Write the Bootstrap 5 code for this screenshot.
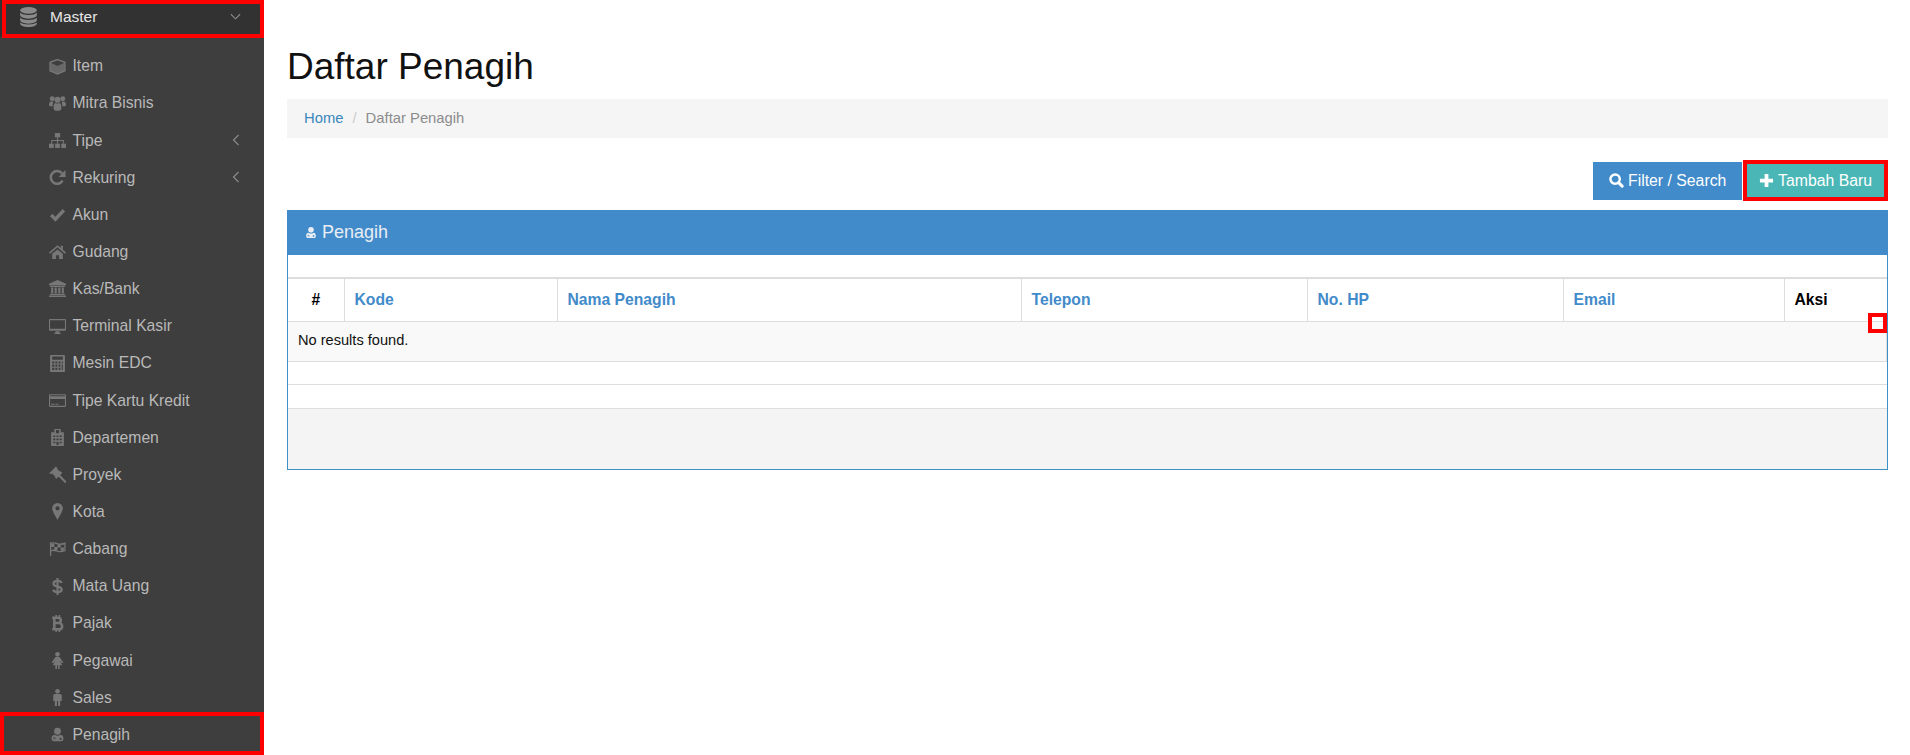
<!DOCTYPE html>
<html lang="id">
<head>
<meta charset="utf-8">
<title>Daftar Penagih</title>
<link rel="stylesheet" href="https://cdn.jsdelivr.net/npm/bootstrap@5.3.0/dist/css/bootstrap.min.css">
<style>
html,body{height:755px;overflow:hidden}
body{font-family:"Liberation Sans",Arial,sans-serif;font-size:14px;color:#000;background:#fff}
.app-shell{height:755px}
.side{width:264px;flex:none;background:#3e3e3e;height:755px;overflow:hidden;position:relative}
.side-head{height:37px;background:#323232;color:#e6e6e6;padding-left:19px;padding-right:23px;font-size:15.5px;padding-bottom:3px}
.side-head svg.ico{width:19px;height:20px;color:#8a8a8a;margin-right:12px;flex:none}
.side-list{padding-top:10.5px}
.side-item{height:37.15px;padding-left:49px;padding-right:23px;color:#b9b9b9;font-size:15.7px}
.side-item svg.ico{width:17px;height:17px;color:#777;margin-right:6.5px;flex:none}
.chev{width:11px;height:12px;color:#8a8a8a;margin-left:auto}
.redbox{position:absolute;border:4px solid #f00;pointer-events:none}
.rb-master{left:2px;top:0;width:262px;height:38px}
.rb-penagih{left:0;top:712px;width:264px;height:43px}
.main-area{padding:0 22px 0 23px;min-width:0}
.page-ttl{font-size:37px;line-height:42px;font-weight:400;margin:46px 0 11px;color:#111}
.crumb{background:#f5f5f5;height:39px;padding:0 17px;margin:0;font-size:14.8px}
.crumb .breadcrumb-item a{color:#3a87bd;text-decoration:none}
.crumb .breadcrumb-item.active{color:#8c8c8c}
.crumb .breadcrumb-item+.breadcrumb-item{padding-left:9px}
.crumb .breadcrumb-item+.breadcrumb-item::before{color:#ccc;padding-right:9px}
.tools{margin-top:22px;height:41px;gap:1px}
.tool-btn{border:0;border-radius:0;color:#fff;font-size:15.8px;height:38px;padding:0;background:#428bca;width:149px}
.tool-btn svg{width:15px;height:15px;vertical-align:-2px}
.tool-add{background:#4ab7b6;border:4px solid #f00;height:41px;width:145px;padding:0}
.pane{margin-top:9px;border:1px solid #3c92c6;border-top:0;height:260px;position:relative;display:flex;flex-direction:column}
.pane-head{background:#428bca;height:45px;margin:0 -1px;padding:0 17px;color:#e8eef4;font-size:18px;gap:4px;padding-bottom:1px}
.pane-head svg{width:14px;height:15px}
.pane-gap{height:22px}
.grid-tbl{table-layout:fixed;width:100%;margin:0;border-top:2px solid #ddd;font-size:14.6px}
.grid-tbl th{height:43px;padding:0 10px;vertical-align:middle;border-bottom:1px solid #ddd;border-right:1px solid #ddd;font-size:15.7px;color:#000}
.grid-tbl th a{color:#428bca;text-decoration:none}
.grid-tbl th:last-child{border-right:0}
.grid-tbl th.c-no{width:56px;text-align:center}
.grid-tbl th.c-kode{width:213px}
.grid-tbl th.c-nama{width:464px}
.grid-tbl th.c-tel{width:286px}
.grid-tbl th.c-hp{width:256px}
.grid-tbl th.c-mail{width:221px}
.grid-tbl td{background:#f9f9f9;height:40px;padding:0 10px;border-bottom:1px solid #ddd;border-right:1px solid #ddd;vertical-align:middle;color:#111}
.line-row{height:23.5px;border-bottom:1px solid #ddd}
.pane-foot{background:#f4f4f4;flex:1}
.mini-red{position:absolute;right:0;top:103px;width:19px;height:20px;border:4px solid #f00}
</style>
</head>
<body>
<svg width="0" height="0" class="d-none" aria-hidden="true">
<symbol id="i-db" viewBox="0 0 16 18"><g fill="currentColor"><ellipse cx="8" cy="3" rx="7.500" ry="3"/><path d="M.5 5c1.500 1.700 4.300 2.200 7.500 2.200S14 6.700 15.500 5v2.500c0 1.500-3.300 3-7.500 3s-7.500-1.500-7.500-3z"/><path d="M.5 9.500c1.500 1.700 4.300 2.200 7.500 2.200s6-.5 7.500-2.200V12c0 1.500-3.300 3-7.500 3s-7.500-1.500-7.500-3z"/><path d="M.5 14c1.500 1.200 4.300 1.800 7.500 1.800s6-.6 7.500-1.800v1c0 1.500-3.300 3-7.500 3s-7.500-1.500-7.500-3z"/></g></symbol>
<symbol id="i-cube" viewBox="0 0 16 16"><path fill="none" stroke="currentColor" stroke-width="1.300" d="M8 1.500l7 2.500v8l-7 3-7-3V4z"/><path fill="currentColor" d="M8 7.500l6.500-3v7.200L8 14.500zM1.500 4.500l6.500 3v7l-6.500-2.800z" fill-opacity=".75"/></symbol>
<symbol id="i-users" viewBox="0 0 16 16"><g fill="currentColor"><circle cx="3" cy="3.500" r="2.300"/><circle cx="13" cy="3.500" r="2.300"/><circle cx="8" cy="4.500" r="2.900"/><path d="M0 9.500c0-3 1-3.500 3-3.500l1.200.6C3.700 7.500 3.500 8.500 3.500 10.500H1c-.6 0-1-.4-1-1zM16 9.500c0-3-1-3.500-3-3.500l-1.200.6c.5.900.7 1.900.7 3.900H15c.6 0 1-.4 1-1z"/><path d="M4.300 12c0-3.500 1-4.500 2.200-4.500l1.500.8 1.500-.8c1.200 0 2.200 1 2.200 4.500 0 1.800-.8 2.800-2.200 2.800h-3c-1.400 0-2.200-1-2.200-2.800z"/></g></symbol>
<symbol id="i-site" viewBox="0 0 16 16"><g fill="currentColor"><rect x="5.500" y="1" width="5" height="4"/><rect x="0" y="11" width="4.500" height="4"/><rect x="5.750" y="11" width="4.500" height="4"/><rect x="11.500" y="11" width="4.500" height="4"/><path d="M7.500 5h1v2.500h5.500V11h-1V8.500H8.500V11h-1V8.500H3V11H2V7.500h5.500z"/></g></symbol>
<symbol id="i-redo" viewBox="0 0 16 16"><path fill="none" stroke="currentColor" stroke-width="2.400" d="M12.800 11A6 6 0 1 1 12.200 4"/><path fill="currentColor" d="M15.500 1v6.500H9z"/></symbol>
<symbol id="i-check" viewBox="0 0 16 16"><path fill="none" stroke="currentColor" stroke-width="3.200" d="M2 8.500l4 4 8-8.500"/></symbol>
<symbol id="i-home" viewBox="0 0 16 16"><path fill="currentColor" d="M8 2L0 9l1 1 7-6 7 6 1-1-3-2.600V2.500h-2v2.100zM3 10.200L8 6l5 4.200V15H9.500v-3.500h-3V15H3z"/></symbol>
<symbol id="i-bank" viewBox="0 0 16 16"><path fill="currentColor" d="M8 0l8 3.500V5H0V3.500zM1 5.500h14v1H1zM2 7h2v5.500H2zM5.300 7h2v5.500h-2zM8.700 7h2v5.500h-2zM12 7h2v5.500h-2zM1 13h14v1H1zM0 14.500h16V16H0z"/></symbol>
<symbol id="i-mon" viewBox="0 0 16 16"><path fill="currentColor" fill-rule="evenodd" d="M1 1h14c.6 0 1 .4 1 1v9c0 .6-.4 1-1 1H1c-.6 0-1-.4-1-1V2c0-.6.4-1 1-1zm0 1v8h14V2zM6 12.500h4V14h1v1H5v-1h1z"/></symbol>
<symbol id="i-calc" viewBox="0 0 16 16"><path fill="currentColor" fill-rule="evenodd" d="M2 0h12c.6 0 1 .4 1 1v14c0 .6-.4 1-1 1H2c-.6 0-1-.4-1-1V1c0-.6.4-1 1-1zm1 1.500v3h10v-3zM3 6v2h2V6zm3 0v2h1.800V6zm3 0v2h1.800V6zm3 0v2h1V6zM3 9v2h2V9zm3 0v2h1.800V9zm3 0v2h1.800V9zm3 0v5h1V9zM3 12v2h2v-2zm3 0v2h1.800v-2zm3 0v2h1.800v-2z"/></symbol>
<symbol id="i-card" viewBox="0 0 16 16"><path fill="currentColor" fill-rule="evenodd" d="M1 2h14c.6 0 1 .4 1 1v10c0 .6-.4 1-1 1H1c-.6 0-1-.4-1-1V3c0-.6.4-1 1-1zm0 1v1h14V3zm0 3.500V13h14V6.500zM2 11h3v1H2zm4 0h3v1H6z"/></symbol>
<symbol id="i-bld" viewBox="0 0 16 16"><path fill="currentColor" fill-rule="evenodd" d="M5 0h6v3h3v13H2V3h3zm1.500 1v3h3V1zM4 6v1.500h2V6zm3 0v1.500h2V6zm3 0v1.500h2V6zM4 9v1.500h2V9zm3 0v1.500h2V9zm3 0v1.500h2V9zm-3 3v3h2v-3zm-3 0v1.500h2V12zm6 0v1.500h2V12z"/></symbol>
<symbol id="i-gavel" viewBox="0 0 16 16"><path fill="currentColor" d="M0 7L6.500 0.500 8 2 7.500 2.500 10.500 5.500 11 5l1.500 1.500L7 12 5.500 10.500 6 10 3 7l-.5.500z"/><path fill="currentColor" d="M8.500 9.500l1.500-1.500 6 6c.5.500.5 1 0 1.500s-1 .5-1.500 0z"/></symbol>
<symbol id="i-pin" viewBox="0 0 16 16"><path fill="currentColor" fill-rule="evenodd" d="M8 0a5 5 0 0 1 5 5c0 3-3 7-5 11C6 12 3 8 3 5a5 5 0 0 1 5-5zm0 3a2 2 0 1 0 0 4 2 2 0 0 0 0-4z"/></symbol>
<symbol id="i-flag" viewBox="0 0 16 16"><path fill="none" stroke="currentColor" stroke-width="1.200" d="M1.500 2v13M2 3c3-1 4 0 6.500 .7 2 .5 4 .3 6.500-.7v7c-2.500 1-4.500 1.200-6.500 .7C6 10 5 9 2 10"/><path fill="currentColor" d="M2 3.500h3v3H2zM5 6.500h3v3H5zM8 4h3v3H8zM11 7h3v3h-3zM11 3.500h3v1h-3z"/></symbol>
<symbol id="i-dollar" viewBox="0 0 16 16"><path fill="none" stroke="currentColor" stroke-width="2.200" d="M12 4.500C11 3 9.500 2.700 8 2.700 6 2.700 4.300 3.700 4.300 5.300c0 3.700 7.600 1.700 7.600 5.600 0 1.500-1.800 2.400-3.900 2.400-1.800 0-3.300-.6-4.300-2"/><path fill="currentColor" d="M7 0h2v16H7z"/></symbol>
<symbol id="i-btc" viewBox="0 0 16 16"><path fill="none" stroke="currentColor" stroke-width="2.400" d="M3 2.500h5.500c3.500 0 3.500 5 0 5H5m0 0h4.500c3.800 0 3.800 6 0 6H3M5 2.500v11"/><path fill="currentColor" d="M6 0h1.500v2.500H6zM9 0h1.500v2.500H9zM6 13.500h1.500V16H6zM9 13.500h1.500V16H9z"/></symbol>
<symbol id="i-fem" viewBox="0 0 16 16"><g fill="currentColor"><circle cx="8" cy="2.200" r="2.200"/><path d="M6 4.800h4l3.500 5-1.200.8L10 8l2.500 4.500H10V16H8.500v-3.500h-1V16H6v-3.500H3.500L6 8l-2.300 2.600-1.200-.8z"/></g></symbol>
<symbol id="i-male" viewBox="0 0 16 16"><g fill="currentColor"><circle cx="8" cy="2.200" r="2.200"/><path d="M5.500 4.800h5c.8 0 1.500.7 1.500 1.500v5h-1.500V16H8.500v-4.700h-1V16H5.500v-4.700H4v-5c0-.8.7-1.500 1.500-1.500z"/></g></symbol>
<symbol id="i-doc" viewBox="-2 0 20 16"><g fill="currentColor"><circle cx="8" cy="4.200" r="4"/><path fill-rule="evenodd" d="M4.500 8.200C2 8.500 1 10.500 1 13c0 1.800 1 3 2.500 3h9c1.500 0 2.500-1.200 2.500-3 0-2.500-1-4.500-3.500-4.800-1 .9-2.300 1.300-3.500 1.300s-2.500-.4-3.500-1.300zM3.200 12.500a1.200 1.200 0 0 1 2.400 0V14h-.7v-1.500a.5.5 0 0 0-1 0V14h-.7zM10.500 12h2.200v2.200h-2.200z"/></g></symbol>
<symbol id="i-search" viewBox="0 0 16 16"><circle cx="6.500" cy="6.500" r="5" fill="none" stroke="currentColor" stroke-width="2.600"/><path stroke="currentColor" stroke-width="3.200" stroke-linecap="round" d="M10.500 10.500l3.500 3.500"/></symbol>
<symbol id="i-plus" viewBox="0 0 16 16"><path fill="currentColor" d="M6 1h4v5h5v4h-5v5H6v-5H1V6h5z"/></symbol>
<symbol id="i-left" viewBox="0 0 10 12"><path fill="none" stroke="currentColor" stroke-width="1.200" d="M8 1L3 6l5 5"/></symbol>
<symbol id="i-down" viewBox="0 0 12 10"><path fill="none" stroke="currentColor" stroke-width="1.200" d="M1 2l5 5 5-5"/></symbol>
</svg>

<div class="d-flex app-shell">
  <aside class="side">
    <div class="side-head d-flex align-items-center">
      <svg class="ico"><use href="#i-db"/></svg><span>Master</span>
      <svg class="chev"><use href="#i-down"/></svg>
    </div>
    <div class="side-list">
      <div class="side-item d-flex align-items-center"><svg class="ico"><use href="#i-cube"/></svg>Item</div>
      <div class="side-item d-flex align-items-center"><svg class="ico"><use href="#i-users"/></svg>Mitra Bisnis</div>
      <div class="side-item d-flex align-items-center"><svg class="ico"><use href="#i-site"/></svg>Tipe<svg class="chev"><use href="#i-left"/></svg></div>
      <div class="side-item d-flex align-items-center"><svg class="ico"><use href="#i-redo"/></svg>Rekuring<svg class="chev"><use href="#i-left"/></svg></div>
      <div class="side-item d-flex align-items-center"><svg class="ico"><use href="#i-check"/></svg>Akun</div>
      <div class="side-item d-flex align-items-center"><svg class="ico"><use href="#i-home"/></svg>Gudang</div>
      <div class="side-item d-flex align-items-center"><svg class="ico"><use href="#i-bank"/></svg>Kas/Bank</div>
      <div class="side-item d-flex align-items-center"><svg class="ico"><use href="#i-mon"/></svg>Terminal Kasir</div>
      <div class="side-item d-flex align-items-center"><svg class="ico"><use href="#i-calc"/></svg>Mesin EDC</div>
      <div class="side-item d-flex align-items-center"><svg class="ico"><use href="#i-card"/></svg>Tipe Kartu Kredit</div>
      <div class="side-item d-flex align-items-center"><svg class="ico"><use href="#i-bld"/></svg>Departemen</div>
      <div class="side-item d-flex align-items-center"><svg class="ico"><use href="#i-gavel"/></svg>Proyek</div>
      <div class="side-item d-flex align-items-center"><svg class="ico"><use href="#i-pin"/></svg>Kota</div>
      <div class="side-item d-flex align-items-center"><svg class="ico"><use href="#i-flag"/></svg>Cabang</div>
      <div class="side-item d-flex align-items-center"><svg class="ico"><use href="#i-dollar"/></svg>Mata Uang</div>
      <div class="side-item d-flex align-items-center"><svg class="ico"><use href="#i-btc"/></svg>Pajak</div>
      <div class="side-item d-flex align-items-center"><svg class="ico"><use href="#i-fem"/></svg>Pegawai</div>
      <div class="side-item d-flex align-items-center"><svg class="ico"><use href="#i-male"/></svg>Sales</div>
      <div class="side-item d-flex align-items-center"><svg class="ico"><use href="#i-doc"/></svg>Penagih</div>
    </div>
    <div class="redbox rb-master"></div>
    <div class="redbox rb-penagih"></div>
  </aside>
  <main class="flex-grow-1 main-area">
    <h1 class="page-ttl">Daftar Penagih</h1>
    <nav aria-label="breadcrumb">
      <ol class="breadcrumb crumb align-items-center">
        <li class="breadcrumb-item"><a href="#">Home</a></li>
        <li class="breadcrumb-item active" aria-current="page">Daftar Penagih</li>
      </ol>
    </nav>
    <div class="d-flex justify-content-end align-items-center tools">
      <button type="button" class="btn tool-btn"><svg><use href="#i-search"/></svg> Filter / Search</button>
      <button type="button" class="btn tool-btn tool-add"><svg><use href="#i-plus"/></svg> Tambah Baru</button>
    </div>
    <section class="pane">
      <div class="pane-head d-flex align-items-center"><svg><use href="#i-doc"/></svg> Penagih</div>
      <div class="pane-gap"></div>
      <table class="table grid-tbl">
        <thead>
          <tr>
            <th class="c-no">#</th>
            <th class="c-kode"><a href="#">Kode</a></th>
            <th class="c-nama"><a href="#">Nama Penagih</a></th>
            <th class="c-tel"><a href="#">Telepon</a></th>
            <th class="c-hp"><a href="#">No. HP</a></th>
            <th class="c-mail"><a href="#">Email</a></th>
            <th>Aksi</th>
          </tr>
        </thead>
        <tbody>
          <tr><td colspan="7">No results found.</td></tr>
        </tbody>
      </table>
      <div class="line-row"></div>
      <div class="line-row"></div>
      <div class="pane-foot"></div>
      <div class="mini-red"></div>
    </section>
  </main>
</div>
<script src="https://cdn.jsdelivr.net/npm/bootstrap@5.3.0/dist/js/bootstrap.bundle.min.js"></script>
</body>
</html>
